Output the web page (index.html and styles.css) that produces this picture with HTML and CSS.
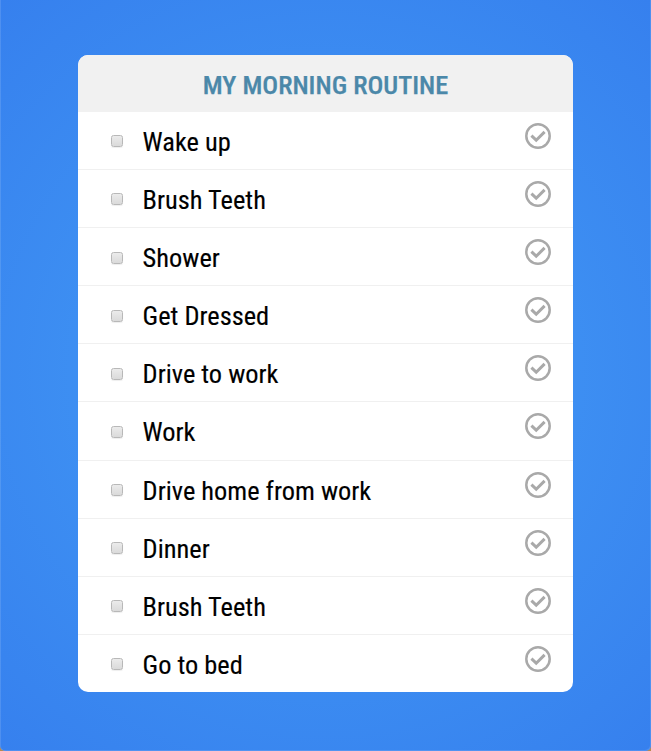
FILE: index.html
```html
<!DOCTYPE html>
<html lang="en">
<head>
<meta charset="utf-8">
<title>My Morning Routine</title>
<link rel="stylesheet" href="styles.css">
</head>
<body>
<svg class="defs" aria-hidden="true">
  <symbol id="done" viewBox="0 0 26 26">
    <circle cx="13" cy="13" r="11.7" fill="none" stroke="currentColor" stroke-width="2.5"/>
    <path d="M6.4 12.7 11.2 17.2 19.6 8.9" fill="none" stroke="currentColor" stroke-width="3"/>
  </symbol>
</svg>
<main class="card">
  <h1 class="title"><span class="title-text">My Morning Routine</span></h1>
  <ul class="list">
    <li class="item"><span class="box"></span><span class="label">Wake up</span><svg class="done"><use href="#done"/></svg></li>
    <li class="item"><span class="box"></span><span class="label">Brush Teeth</span><svg class="done"><use href="#done"/></svg></li>
    <li class="item"><span class="box"></span><span class="label">Shower</span><svg class="done"><use href="#done"/></svg></li>
    <li class="item"><span class="box"></span><span class="label">Get Dressed</span><svg class="done"><use href="#done"/></svg></li>
    <li class="item"><span class="box"></span><span class="label">Drive to work</span><svg class="done"><use href="#done"/></svg></li>
    <li class="item"><span class="box"></span><span class="label">Work</span><svg class="done"><use href="#done"/></svg></li>
    <li class="item"><span class="box"></span><span class="label">Drive home from work</span><svg class="done"><use href="#done"/></svg></li>
    <li class="item"><span class="box"></span><span class="label">Dinner</span><svg class="done"><use href="#done"/></svg></li>
    <li class="item"><span class="box"></span><span class="label">Brush Teeth</span><svg class="done"><use href="#done"/></svg></li>
    <li class="item"><span class="box"></span><span class="label">Go to bed</span><svg class="done"><use href="#done"/></svg></li>
  </ul>
</main>
</body>
</html>
```
FILE: styles.css
```css
* { box-sizing: border-box; }
html { background: #b98a4e; }
body {
  margin: 0;
  height: 751px;
  padding: 55px 78px 0;
  overflow: hidden;
  background: radial-gradient(circle at center, #449df6 0%, #3680ee 100%);
  border-radius: 0 0 5px 5px;
  box-shadow: inset 1px 0 rgba(255, 255, 255, 0.12), inset -1px -1px rgba(255, 255, 255, 0.12);
  font-family: "Roboto Condensed", Roboto, sans-serif;
  font-stretch: 75%;
}
.defs { display: none; }
.card {
  height: 637px;
  background: #fff;
  border-radius: 10px;
  overflow: hidden;
}
.title {
  margin: 0;
  height: 56.85px;
  display: flex;
  justify-content: center;
  padding-top: 4px;
  background: #f1f1f1;
  color: #4b88a9;
  font-size: 26.3px;
  line-height: 52px;
  font-weight: 500;
  -webkit-text-stroke: 0.25px #4b88a9;
  text-transform: uppercase;
  white-space: nowrap;
}
.list { list-style: none; margin: 0; padding: 0; }
.item {
  display: flex;
  height: 58.12px;
  padding: 0 22px 0 33px;
  border-bottom: 1px solid #f0f0f0;
}
.item:last-child { border-bottom: 0; }
.box {
  width: 12px;
  height: 12px;
  margin: 23.5px 19.6px 0 0;
  border: 1px solid #b8b8b8;
  border-radius: 2.5px;
  background: linear-gradient(#ebebeb, #dadada);
  box-shadow: 0 1px 1px #eee;
}
.label {
  flex: 1;
  font-size: 26.4px;
  line-height: 60px;
  color: #000;
  -webkit-text-stroke: 0.15px #000;
  white-space: nowrap;
}
.done { width: 26px; height: 26px; margin-top: 11px; color: #a9a9a9; }
```
